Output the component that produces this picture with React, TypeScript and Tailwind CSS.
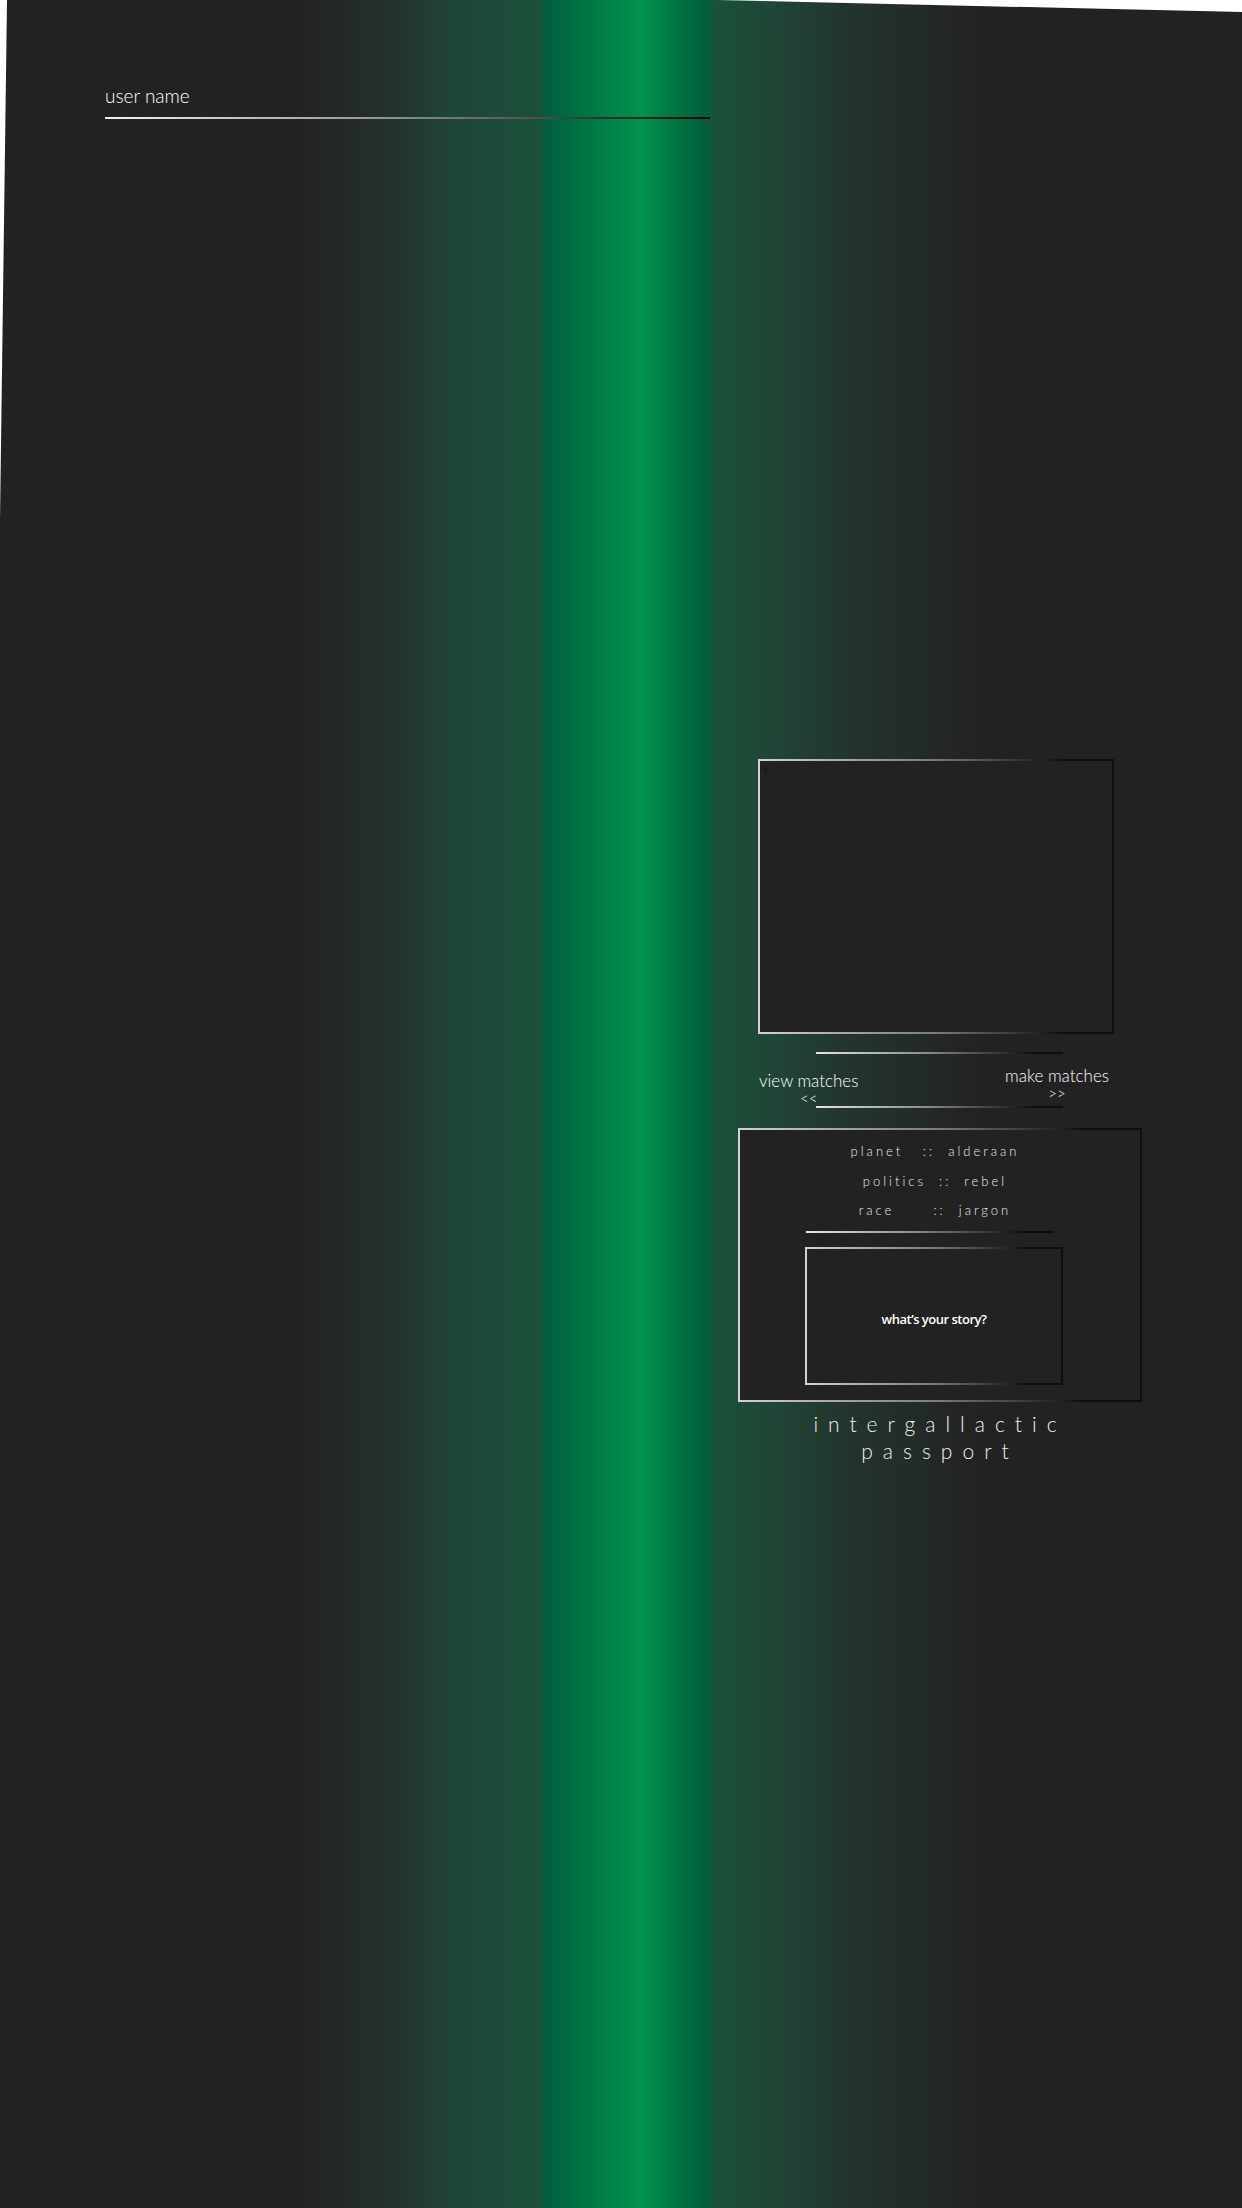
import type { FC, ReactNode } from "react";

// thin rule that fades from light grey to black, used under headings
const FadeLine: FC<{ className: string }> = ({ className }) => (
  <div className={`h-[2px] bg-[linear-gradient(to_right,#e6e6e6,#8a8a8a_45%,#0d0d0d_88%)] ${className}`} />
);

// box with a left-to-right fading border
const Frame: FC<{ className: string; inner?: string; children?: ReactNode }> = ({ className, inner = "", children }) => (
  <div className={`p-[2px] bg-[linear-gradient(to_right,#d2d2d2,#7a7a7a_50%,#0e0e0e_86%)] ${className}`}>
    <div className={`w-full h-full bg-[#222222] ${inner}`}>{children}</div>
  </div>
);

const App: FC = () => {
  return (
    <div className="w-full h-[2208px] overflow-hidden bg-[linear-gradient(to_right,#222222_24%,#24302b_31%,#1f4536_36.5%,#1d4b39_40%,#1b503b_43.4%,#006040_44.1%,#00934b_51.6%,#005e3c_56.8%,#1b5039_57.7%,#1f4636_62%,#23352d_68%,#222222_79%)] [clip-path:polygon(7px_0,717px_0,100%_12px,100%_100%,0_100%,0_520px)] font-['Lato','Liberation_Sans',sans-serif] text-white">
      {/* user name header */}
      <div className="pt-[85px] pl-[105px]">
        <p className="text-[19px] leading-[21px] font-light">user name</p>
        <FadeLine className="mt-[11px] w-[605px] bg-[linear-gradient(to_right,#f2f2f2,#8a8a8a_50%,#000000)]" />
      </div>

      {/* passport column */}
      <div className="ml-[738px] w-[404px] mt-[640px]">
        <Frame className="ml-[20px] w-[356px] h-[275px]" inner="pl-[4px] pt-[4px]">
          <span className="block text-[9px] leading-[10px] text-[#151515]">t</span>
        </Frame>

        <FadeLine className="mt-[18px] ml-[78px] w-[247px]" />

        <div className="h-[52px] flex justify-between items-start pl-[21px] pr-[33px] font-light text-white">
          <div className="mt-[17px] flex flex-col items-center">
            <span className="text-[17px] leading-[20px]">view matches</span>
            <span className="text-[15px] leading-[14px]">&lt;&lt;</span>
          </div>
          <div className="mt-[12px] flex flex-col items-center">
            <span className="text-[17px] leading-[20px]">make matches</span>
            <span className="text-[15px] leading-[14px]">&gt;&gt;</span>
          </div>
        </div>

        <FadeLine className="ml-[78px] w-[247px]" />

        <Frame className="mt-[20px] w-[404px] h-[274px]" inner="pt-[7px]">
          <div className="pr-[10px] flex flex-col items-center text-[13px] leading-[29.5px] tracking-[3px] font-light text-[#ececec] whitespace-pre">
            <span>planet   ::  alderaan</span>
            <span>politics  ::  rebel</span>
            <span>race      ::  jargon</span>
          </div>
          <FadeLine className="mt-[5px] ml-[66px] w-[248px]" />
          <Frame className="mt-[14px] ml-[65px] w-[258px] h-[138px]" inner="flex items-center justify-center pt-[8px]">
            <span className="font-['Open_Sans','Liberation_Sans',sans-serif] text-[13px] font-semibold tracking-[-0.5px] text-white">
              what’s your story?
            </span>
          </Frame>
        </Frame>

        <h1 className="mt-[8px] w-[404px] text-center text-[21px] leading-[27px] tracking-[10px] font-light text-[#f0f0f0]">
          intergallactic
          <br />
          passport
        </h1>
      </div>
    </div>
  );
};

export default App;
